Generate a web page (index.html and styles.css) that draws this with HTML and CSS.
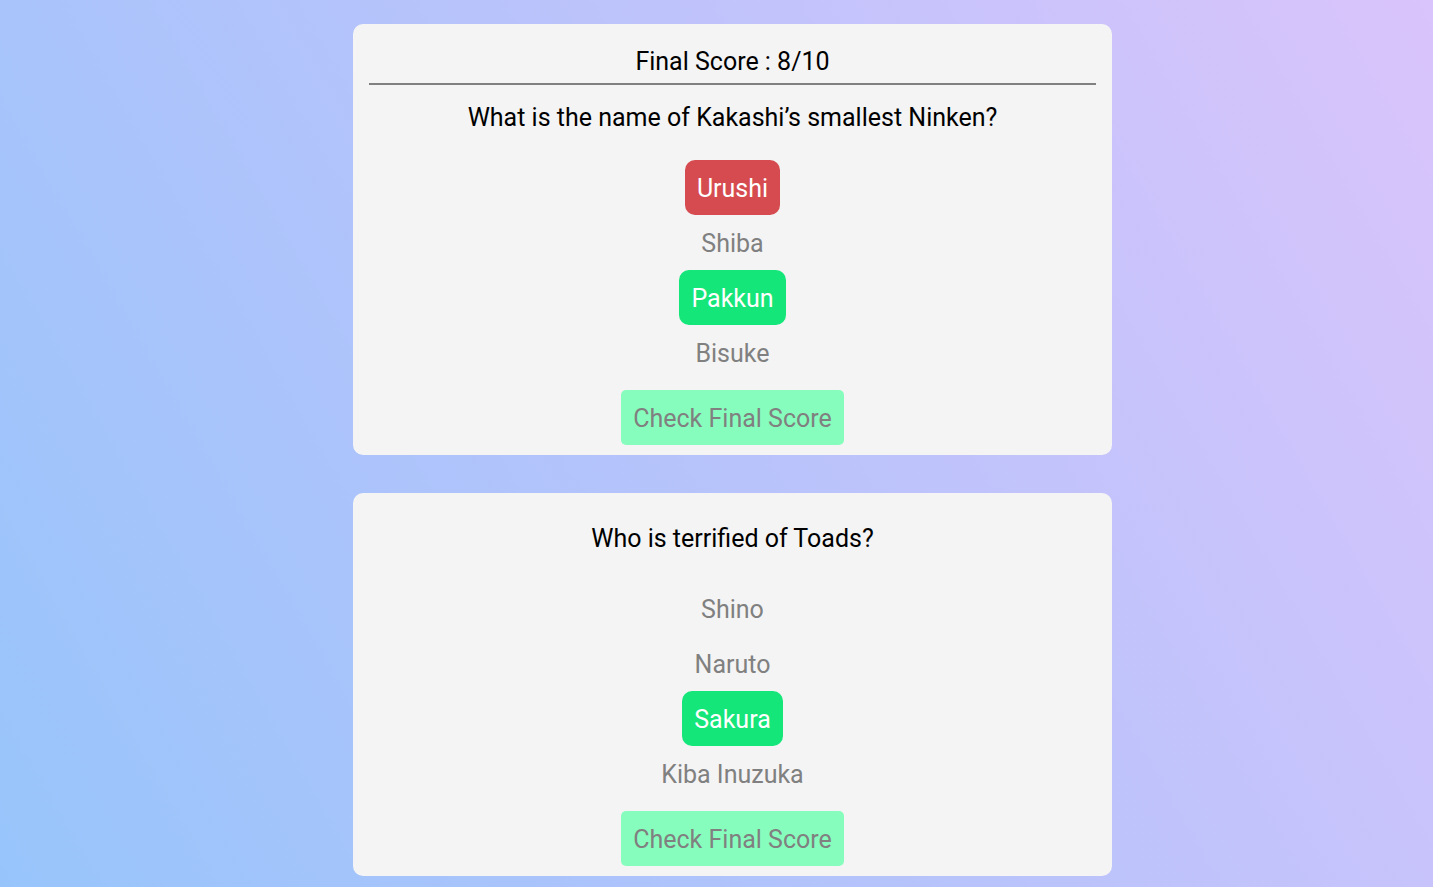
FILE: index.html
```html
<!DOCTYPE html>
<html lang="en">
<head>
<meta charset="utf-8">
<title>Quiz</title>
<link rel="stylesheet" href="styles.css">
</head>
<body>
<main class="quiz">
  <section class="card">
    <h2 class="score">Final Score : 8/10</h2>
    <h3 class="question">What is the name of Kakashi’s smallest Ninken?</h3>
    <div class="options">
      <div class="option wrong">Urushi</div>
      <div class="option">Shiba</div>
      <div class="option right">Pakkun</div>
      <div class="option">Bisuke</div>
    </div>
    <button class="check">Check Final Score</button>
  </section>
  <section class="card">
    <h3 class="question">Who is terrified of Toads?</h3>
    <div class="options">
      <div class="option">Shino</div>
      <div class="option">Naruto</div>
      <div class="option right">Sakura</div>
      <div class="option">Kiba Inuzuka</div>
    </div>
    <button class="check">Check Final Score</button>
  </section>
</main>
</body>
</html>
```
FILE: styles.css
```css
html, body {
  margin: 0;
  min-height: 100%;
}
body {
  min-height: 887px;
  padding: 24px 0 24px 32px;
  box-sizing: border-box;
  font-family: Roboto, "Liberation Sans", sans-serif;
  background: linear-gradient(60deg, #97c5fb 0%, #b8c3fb 50%, #d9c4fb 100%);
  background-attachment: fixed;
}
.quiz {
  width: 759px;
  margin: 0 auto;
  display: flex;
  flex-direction: column;
  gap: 38px;
}
.card {
  background: #f4f4f4;
  border-radius: 10px;
  padding: 10px 16px;
  display: flex;
  flex-direction: column;
  align-items: center;
}
.score {
  align-self: stretch;
  margin: 14px 0 0;
  padding-bottom: 7px;
  border-bottom: 2px solid #808080;
  font-size: 25px;
  font-weight: 400;
  line-height: 28px;
  text-align: center;
  color: #000;
}
.question {
  margin: 22px 0 28px;
  font-size: 25px;
  font-weight: 400;
  line-height: 28px;
  text-align: center;
  color: #000;
}
.score + .question {
  margin-top: 19px;
}
.options {
  display: flex;
  flex-direction: column;
  align-items: center;
}
.option {
  height: 55px;
  padding: 2px 12px 0;
  box-sizing: border-box;
  display: flex;
  align-items: center;
  justify-content: center;
  font-size: 25px;
  color: #808080;
  border-radius: 10px;
}
.option.wrong {
  background: #d64b4f;
  color: #fff;
}
.option.right {
  background: #15e67a;
  color: #fff;
}
.check {
  margin-top: 10px;
  height: 55px;
  padding: 2px 12px 0;
  border: none;
  border-radius: 5px;
  background: #87fdbd;
  color: #808080;
  font-family: Roboto, "Liberation Sans", sans-serif;
  font-size: 25px;
}
```
